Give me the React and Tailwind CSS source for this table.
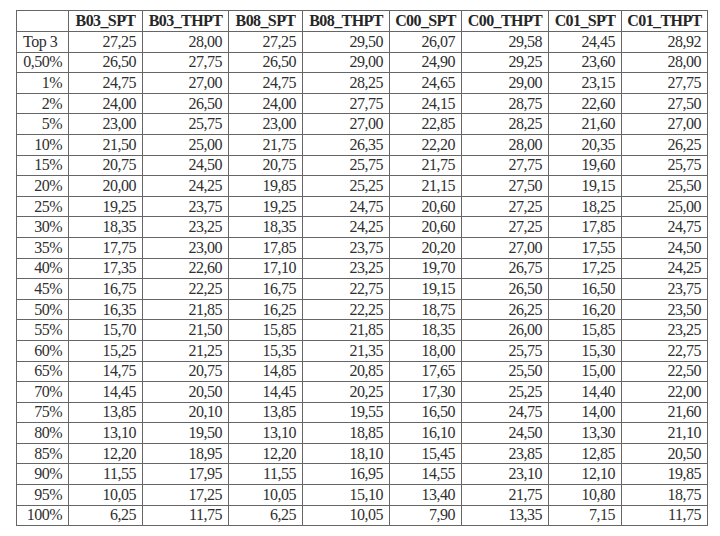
const headers = ['B03_SPT', 'B03_THPT', 'B08_SPT', 'B08_THPT', 'C00_SPT', 'C00_THPT', 'C01_SPT', 'C01_THPT'];

const colWidths = ['w-[52px]', 'w-[74px]', 'w-[86px]', 'w-[74px]', 'w-[87px]', 'w-[72px]', 'w-[87px]', 'w-[73px]', 'w-[86px]'];

const rows = [
  ['Top 3', '27,25', '28,00', '27,25', '29,50', '26,07', '29,58', '24,45', '28,92'],
  ['0,50%', '26,50', '27,75', '26,50', '29,00', '24,90', '29,25', '23,60', '28,00'],
  ['1%', '24,75', '27,00', '24,75', '28,25', '24,65', '29,00', '23,15', '27,75'],
  ['2%', '24,00', '26,50', '24,00', '27,75', '24,15', '28,75', '22,60', '27,50'],
  ['5%', '23,00', '25,75', '23,00', '27,00', '22,85', '28,25', '21,60', '27,00'],
  ['10%', '21,50', '25,00', '21,75', '26,35', '22,20', '28,00', '20,35', '26,25'],
  ['15%', '20,75', '24,50', '20,75', '25,75', '21,75', '27,75', '19,60', '25,75'],
  ['20%', '20,00', '24,25', '19,85', '25,25', '21,15', '27,50', '19,15', '25,50'],
  ['25%', '19,25', '23,75', '19,25', '24,75', '20,60', '27,25', '18,25', '25,00'],
  ['30%', '18,35', '23,25', '18,35', '24,25', '20,60', '27,25', '17,85', '24,75'],
  ['35%', '17,75', '23,00', '17,85', '23,75', '20,20', '27,00', '17,55', '24,50'],
  ['40%', '17,35', '22,60', '17,10', '23,25', '19,70', '26,75', '17,25', '24,25'],
  ['45%', '16,75', '22,25', '16,75', '22,75', '19,15', '26,50', '16,50', '23,75'],
  ['50%', '16,35', '21,85', '16,25', '22,25', '18,75', '26,25', '16,20', '23,50'],
  ['55%', '15,70', '21,50', '15,85', '21,85', '18,35', '26,00', '15,85', '23,25'],
  ['60%', '15,25', '21,25', '15,35', '21,35', '18,00', '25,75', '15,30', '22,75'],
  ['65%', '14,75', '20,75', '14,85', '20,85', '17,65', '25,50', '15,00', '22,50'],
  ['70%', '14,45', '20,50', '14,45', '20,25', '17,30', '25,25', '14,40', '22,00'],
  ['75%', '13,85', '20,10', '13,85', '19,55', '16,50', '24,75', '14,00', '21,60'],
  ['80%', '13,10', '19,50', '13,10', '18,85', '16,10', '24,50', '13,30', '21,10'],
  ['85%', '12,20', '18,95', '12,20', '18,10', '15,45', '23,85', '12,85', '20,50'],
  ['90%', '11,55', '17,95', '11,55', '16,95', '14,55', '23,10', '12,10', '19,85'],
  ['95%', '10,05', '17,25', '10,05', '15,10', '13,40', '21,75', '10,80', '18,75'],
  ['100%', '6,25', '11,75', '6,25', '10,05', '7,90', '13,35', '7,15', '11,75'],
];

export default function App() {
  return (
    <div className="w-[720px] h-[536px] bg-white pl-[16px] pt-[10px] font-['Liberation_Serif','Times_New_Roman',serif] text-[#2f2f2f]">
      <table className="table-fixed border-collapse w-[692px] text-[16px] leading-none tracking-[-0.5px]">
        <colgroup>
          {colWidths.map((w, i) => (
            <col key={i} className={w} />
          ))}
        </colgroup>
        <thead>
          <tr className="h-[21px]">
            <th className="border border-[#666666]"></th>
            {headers.map((h) => (
              <th key={h} className="border border-[#666666] font-bold text-center tracking-[-0.6px] text-[#262626]">
                {h}
              </th>
            ))}
          </tr>
        </thead>
        <tbody>
          {rows.map((row) => (
            <tr key={row[0]} className="h-[20.6px]">
              {row.map((cell, i) => (
                <td
                  key={i}
                  className={`border border-[#666666] px-[6px] ${i === 0 && cell === 'Top 3' ? 'text-left' : 'text-right'}`}
                >
                  {cell}
                </td>
              ))}
            </tr>
          ))}
        </tbody>
      </table>
    </div>
  );
}
